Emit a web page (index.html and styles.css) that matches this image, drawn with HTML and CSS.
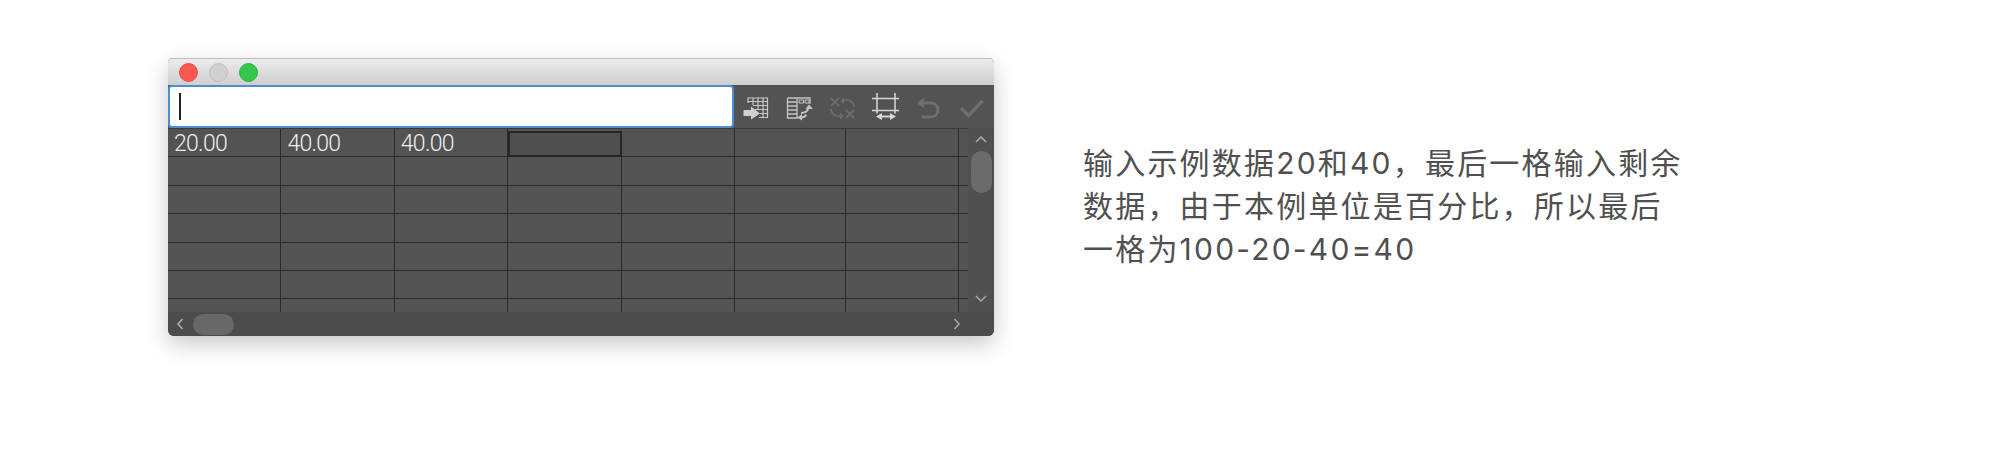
FILE: index.html
```html
<!DOCTYPE html>
<html lang="zh-CN">
<head>
    <meta charset="UTF-8">
    <title>输入示例数据</title>
    <link rel="stylesheet" href="styles.css">
</head>
<body>
    <div class="page">
        <div class="window">
            <div class="titlebar">
                <span class="light light-red"></span>
                <span class="light light-gray"></span>
                <span class="light light-green"></span>
            </div>
            <div class="toolbar">
                <div class="entry"><span class="caret"></span></div>
                <div class="tool">
                    <svg width="28" height="28" viewBox="0 0 28 28" fill="none" stroke="#c8c8c8" stroke-width="1.2">
                        <path d="M6 10V5H25.500V24.500H17M6 8.500H25.500M11 12.500H25.500M13 16.500H25.500M18 20.500H25.500M11 5V12M16 5V17M21 5V24"/>
                        <path d="M1.500 17H9V13.500L18 20.500L9 26.500V23H1.500Z" fill="#cfcfcf" stroke="none"/>
                    </svg>
                </div>
                <div class="tool">
                    <svg width="28" height="28" viewBox="0 0 28 28" fill="none" stroke="#c4c4c4" stroke-width="1.3">
                        <path d="M2.500 5H25V11M2.500 5V25H13M12 5V25M2.500 9H12M2.500 13H12M2.500 17H12M2.500 21H12"/>
                        <path d="M14 7H18.500V10H14ZM20 7H24V10H20Z" stroke-width="1"/>
                        <path d="M16 20C19 20 22.500 18.500 23.500 15M15.500 24.500C18 24.500 20.500 24 21 21.500" stroke-width="2"/>
                        <path d="M20.500 16L24 11.500L28 16ZM17 21L12.500 24.500L17 27.500Z" fill="#c4c4c4" stroke="none"/>
                    </svg>
                </div>
                <div class="tool">
                    <svg width="28" height="28" viewBox="0 0 28 28" fill="none" stroke="#6d6d6d" stroke-width="1.800">
                        <path d="M3 5L11 13M11 5L3 13M18 17L26 25M26 17L18 25"/>
                        <path d="M16 7C21 6 26 9 26 14M12 23C7 24 3 20 3 16"/>
                        <path d="M16 4V11L12.500 7.500ZM12 19.500V26.500L15.500 23Z" fill="#6d6d6d" stroke="none"/>
                    </svg>
                </div>
                <div class="tool">
                    <svg width="28" height="28" viewBox="0 0 28 28" fill="none" stroke="#d8d8d8" stroke-width="1.500">
                        <path d="M0 5.500H27M0 17.500H27M5 0V20.500M23 0V20.500"/>
                        <path d="M8 23.500H20" stroke-width="2.200"/>
                        <path d="M4 23.500L10 20V27ZM24 23.500L18 20V27Z" fill="#d8d8d8" stroke="none"/>
                    </svg>
                </div>
                <div class="tool">
                    <svg width="28" height="28" viewBox="0 0 28 28" fill="none" stroke="#6f6f6f" stroke-width="2.800">
                        <path d="M6 10H15C20 10 23 13 23 17C23 21 20 24 15 24H7"/>
                        <path d="M2 10L9 4.500V15.500Z" fill="#6f6f6f" stroke="none"/>
                    </svg>
                </div>
                <div class="tool">
                    <svg width="28" height="28" viewBox="0 0 28 28" fill="none" stroke="#6f6f6f" stroke-width="3.400">
                        <path d="M3 15L10.500 22.500L24.500 8"/>
                    </svg>
                </div>
            </div>
            <div class="content">
                <div class="sheet">
                    <div class="cell">20.00</div><div class="cell">40.00</div><div class="cell">40.00</div><div class="cell cell-active"></div><div class="cell"></div><div class="cell"></div><div class="cell"></div><div class="cell"></div>
                    <div class="cell"></div><div class="cell"></div><div class="cell"></div><div class="cell"></div><div class="cell"></div><div class="cell"></div><div class="cell"></div><div class="cell"></div>
                    <div class="cell"></div><div class="cell"></div><div class="cell"></div><div class="cell"></div><div class="cell"></div><div class="cell"></div><div class="cell"></div><div class="cell"></div>
                    <div class="cell"></div><div class="cell"></div><div class="cell"></div><div class="cell"></div><div class="cell"></div><div class="cell"></div><div class="cell"></div><div class="cell"></div>
                    <div class="cell"></div><div class="cell"></div><div class="cell"></div><div class="cell"></div><div class="cell"></div><div class="cell"></div><div class="cell"></div><div class="cell"></div>
                    <div class="cell"></div><div class="cell"></div><div class="cell"></div><div class="cell"></div><div class="cell"></div><div class="cell"></div><div class="cell"></div><div class="cell"></div>
                    <div class="cell"></div><div class="cell"></div><div class="cell"></div><div class="cell"></div><div class="cell"></div><div class="cell"></div><div class="cell"></div><div class="cell"></div>
                </div>
                <div class="vscroll">
                    <svg class="arrow" width="14" height="8" viewBox="0 0 14 8" fill="none" stroke="#b0b0b0" stroke-width="1.500"><path d="M2 7L7 2L12 7"/></svg>
                    <div class="vthumb"></div>
                    <svg class="arrow arrow-end" width="14" height="8" viewBox="0 0 14 8" fill="none" stroke="#a8a8a8" stroke-width="1.500"><path d="M2 1L7 6L12 1"/></svg>
                </div>
            </div>
            <div class="hscroll">
                <svg width="8" height="14" viewBox="0 0 8 14" fill="none" stroke="#b0b0b0" stroke-width="1.500"><path d="M6.500 2L2 7L6.500 12"/></svg>
                <div class="hthumb"></div>
                <svg class="arrow-end" width="8" height="14" viewBox="0 0 8 14" fill="none" stroke="#a8a8a8" stroke-width="1.500"><path d="M1.500 2L6 7L1.500 12"/></svg>
            </div>
        </div>
        <p class="note">输入示例数据20和40，最后一格输入剩余<br>数据，由于本例单位是百分比，所以最后<br>一格为100-20-40=40</p>
    </div>
</body>
</html>
```

FILE: styles.css
```css
body {
    margin: 0;
    background-color: #ffffff;
}

.page {
    display: flex;
    align-items: flex-start;
    padding: 58px 0 0 168px;
    height: 397px;
    overflow: hidden;
}

.window {
    width: 826px;
    height: 278px;
    flex-shrink: 0;
    display: flex;
    flex-direction: column;
    background: #535353;
    border-radius: 5px 5px 6px 6px;
    overflow: hidden;
    box-shadow: 0 8px 22px rgba(0, 0, 0, 0.22);
}

.titlebar {
    height: 27px;
    flex-shrink: 0;
    display: flex;
    align-items: center;
    gap: 11px;
    padding-left: 11px;
    box-sizing: border-box;
    border-top: 1px solid #bdbdbd;
    background: linear-gradient(#ececec, #cfcfcf);
}

.light {
    width: 19px;
    height: 19px;
    border-radius: 50%;
    box-sizing: border-box;
}

.light-red {
    background: #fc5753;
    border: 1px solid #e9504c;
}

.light-gray {
    background: #d0d0d0;
    border: 1px solid #bdbdbd;
}

.light-green {
    background: #34c749;
    border: 1px solid #2db43f;
}

.toolbar {
    height: 43px;
    flex-shrink: 0;
    display: flex;
    align-items: center;
    background: #535353;
}

.entry {
    width: 566px;
    height: 43px;
    flex-shrink: 0;
    display: flex;
    align-items: center;
    padding-left: 9px;
    box-sizing: border-box;
    background: #ffffff;
    border: 2px solid #4d8fd6;
    border-radius: 4px;
}

.caret {
    width: 2px;
    height: 27px;
    background: #222222;
}

.tool {
    width: 43.3px;
    height: 43px;
    display: flex;
    align-items: center;
    justify-content: center;
}

.tool svg {
    margin-top: 1px;
}

.content {
    flex: 1;
    min-height: 0;
    display: flex;
}

.sheet {
    width: 800px;
    flex-shrink: 0;
    display: grid;
    grid-template-columns: repeat(5, 113.4px) 111.4px 113px 8.6px;
    grid-auto-rows: 28.4px;
    border-top: 1px solid #3a3a3a;
    overflow: hidden;
    background: #535353;
}

.cell {
    box-sizing: border-box;
    border-right: 1px solid #2b2b2b;
    border-bottom: 1px solid #2b2b2b;
    padding: 0 0 0 6px;
    font-family: Roboto, "Liberation Sans", sans-serif;
    font-weight: 300;
    font-size: 23px;
    line-height: 29px;
    letter-spacing: -0.7px;
    color: #eeeeee;
}

.cell:nth-child(8n) {
    border-right: none;
}

.cell-active {
    margin: 2px 0 0 0;
    border: 2px solid #262626;
    background: #4f4f4f;
}

.vscroll {
    flex: 1;
    display: flex;
    flex-direction: column;
    align-items: center;
    padding: 7px 0 9px;
    background: #505050;
}

.vthumb {
    width: 21px;
    height: 42px;
    margin-top: 8px;
    border-radius: 11px;
    background: #6b6b6b;
}

.arrow-end {
    margin-top: auto;
}

.hscroll {
    height: 24px;
    flex-shrink: 0;
    display: flex;
    align-items: center;
    padding: 0 33px 0 8px;
    background: #4c4c4c;
}

.hthumb {
    width: 41px;
    height: 21px;
    margin-left: 9px;
    border-radius: 11px;
    background: #686868;
}

.hscroll .arrow-end {
    margin: 0 0 0 auto;
}

.note {
    margin: 84px 0 0 89px;
    white-space: nowrap;
    font-family: Inter, "Noto Sans CJK SC", sans-serif;
    font-size: 30px;
    line-height: 43px;
    letter-spacing: 2.2px;
    color: #505050;
}
```
